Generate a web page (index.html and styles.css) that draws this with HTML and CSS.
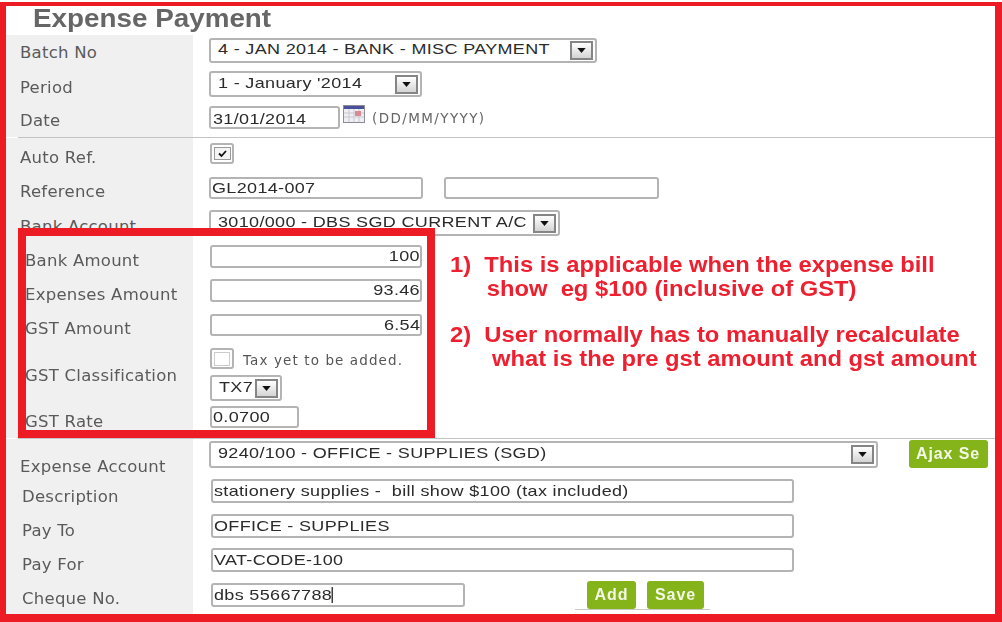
FILE: index.html
```html
<!DOCTYPE html>
<html lang="en">
<head>
<meta charset="utf-8">
<title>Expense Payment</title>
<link rel="stylesheet" href="styles.css">
</head>
<body>
<main class="frame">
  <div class="soft">
    <h1 class="title"><span>Expense Payment</span></h1>
    <div class="row r-batch"><div class="label">Batch No</div><div class="cell"><div class="field select w-batch"><span class="tx">4 - JAN 2014 - BANK - MISC PAYMENT</span><svg class="arrow" viewBox="0 0 22 18"><path d="M6 6h10l-5 6z"/></svg></div></div></div>
    <div class="row r-period"><div class="label">Period</div><div class="cell"><div class="field select w-period"><span class="tx">1 - January '2014</span><svg class="arrow" viewBox="0 0 22 18"><path d="M6 6h10l-5 6z"/></svg></div></div></div>
    <div class="row r-date"><div class="label">Date</div><div class="cell inline"><div class="field text w-date"><span class="tx">31/01/2014</span></div>
      <svg class="cal" viewBox="0 0 22 18"><rect x=".5" y=".5" width="21" height="17" fill="#efeef2" stroke="#8d8d95"/><rect x="1" y="1" width="20" height="3" fill="#4a4f9c"/><path d="M1 8h20M1 12h20M6 4v13M11 4v13M16 4v13" stroke="#c9c9d2" fill="none"/><rect x="12" y="6" width="6" height="5" fill="#d98a94"/></svg>
      <span class="hint">(DD/MM/YYYY)</span></div></div>
    <div class="row r-auto rule"><div class="label">Auto Ref.</div><div class="cell"><div class="check"><svg viewBox="0 0 17 13"><rect x=".5" y=".5" width="16" height="12" fill="#f4f4f4" stroke="#9a9a9a"/><path d="M5 6.500l2.500 2.500 4.500-5" fill="none" stroke="#111" stroke-width="1.800"/></svg></div></div></div>
    <div class="row r-ref"><div class="label">Reference</div><div class="cell inline"><div class="field text w-ref"><span class="tx">GL2014-007</span></div><div class="field text w-ref2"></div></div></div>
    <div class="row r-bank"><div class="label">Bank Account</div><div class="cell"><div class="field select w-bank"><span class="tx">3010/000 - DBS SGD CURRENT A/C</span><svg class="arrow" viewBox="0 0 22 18"><path d="M6 6h10l-5 6z"/></svg></div></div></div>
    <div class="row r-amt1 boxed"><div class="label">Bank Amount</div><div class="cell"><div class="field text num w-amt"><span class="tx">100</span></div></div></div>
    <div class="row r-amt2 boxed"><div class="label">Expenses Amount</div><div class="cell"><div class="field text num w-amt"><span class="tx">93.46</span></div></div></div>
    <div class="row r-amt3 boxed"><div class="label">GST Amount</div><div class="cell"><div class="field text num w-amt"><span class="tx">6.54</span></div></div></div>
    <div class="row r-class boxed"><div class="label">GST Classification</div><div class="cell stack">
      <div class="inline"><div class="check"></div><span class="tax">Tax yet to be added.</span></div>
      <div class="field select w-tx"><span class="tx">TX7</span><svg class="arrow" viewBox="0 0 22 18"><path d="M6 6h10l-5 6z"/></svg></div>
    </div></div>
    <div class="row r-rate boxed"><div class="label">GST Rate</div><div class="cell"><div class="field text w-rate"><span class="tx">0.0700</span></div></div></div>
    <div class="row r-exp rule"><div class="label">Expense Account</div><div class="cell inline between"><div class="field select w-exp"><span class="tx">9240/100 - OFFICE - SUPPLIES (SGD)</span><svg class="arrow" viewBox="0 0 22 18"><path d="M6 6h10l-5 6z"/></svg></div><div class="btn btn-ajax"><span>Ajax Se</span></div></div></div>
    <div class="row r-desc lower"><div class="label">Description</div><div class="cell"><div class="field text w-long"><span class="tx">stationery supplies -&nbsp; bill show $100 (tax included)</span></div></div></div>
    <div class="row r-payto lower"><div class="label">Pay To</div><div class="cell"><div class="field text w-long"><span class="tx">OFFICE - SUPPLIES</span></div></div></div>
    <div class="row r-payfor lower"><div class="label">Pay For</div><div class="cell"><div class="field text w-long"><span class="tx">VAT-CODE-100</span></div></div></div>
    <div class="row r-cheque lower"><div class="label">Cheque No.</div><div class="cell inline"><div class="field text w-cheque"><span class="tx">dbs 55667788<i class="caret"></i></span></div>
      <div class="actions"><div class="btn btn-add">Add</div><div class="btn btn-save">Save</div></div></div></div>
  </div>
  <div class="callout"></div>
  <div class="notes">
    <p>1)&nbsp; This is applicable when the expense bill</p>
    <p class="n2">show&nbsp; eg $100 (inclusive of GST)</p>
    <p class="n3">2)&nbsp; User normally has to manually recalculate</p>
    <p class="n4">what is the pre gst amount and gst amount</p>
  </div>
</main>
</body>
</html>
```
FILE: styles.css
```css
* { box-sizing: border-box; }
html, body { margin: 0; padding: 0; }
body { width: 1002px; height: 622px; overflow: hidden; background: #fff; padding-top: 2px; }
.frame {
  position: relative; width: 1002px; height: 620px;
  border: solid #ed1c24; border-width: 4px 7px 8px 6px;
  background: #fff; overflow: hidden;
}
.soft { filter: blur(.4px); }
.title {
  margin: 0; height: 29px; padding-left: 27px;
  font: bold 26px/24px "Liberation Sans", Arial, sans-serif; color: #666;
}
.title span { display: inline-block; transform: scaleX(1.07); transform-origin: left; }
.row { display: grid; grid-template-columns: 187px 1fr; height: var(--h); }
.label {
  background: #f0f0f0; padding: var(--lt) 0 0 14px;
  font: 16.500px/20px "DejaVu Sans", sans-serif; letter-spacing: .25px; color: #5a5a5a; white-space: nowrap;
  overflow: hidden;
}
.boxed .label { padding-left: 19px; }
.lower .label { padding-left: 16px; }
.cell { padding: var(--ct) 0 0 16px; min-width: 0; }
.inline { display: flex; align-items: flex-start; }
.stack { display: flex; flex-direction: column; }
.rule { position: relative; border-top: 1px solid #c4c4c4; }
.rule::before { content: ""; position: absolute; left: 0; top: -1px; width: 12px; height: 1px; background: #fff; }

.r-batch  { --h: 34px; --lt: 8px;  --ct: 3px; }
.r-period { --h: 34px; --lt: 9px;  --ct: 2px; }
.r-date   { --h: 34px; --lt: 8px;  --ct: 3px; }
.r-auto   { --h: 35px; --lt: 10px; --ct: 5px; }
.r-ref    { --h: 34px; --lt: 10px; --ct: 5px; }
.r-bank   { --h: 35px; --lt: 11px; --ct: 4px; }
.r-amt1   { --h: 34px; --lt: 10px; --ct: 4px; }
.r-amt2   { --h: 35px; --lt: 10px; --ct: 4px; }
.r-amt3   { --h: 34px; --lt: 9px;  --ct: 4px; }
.r-class  { --h: 60px; --lt: 22px; --ct: 4px; }
.r-rate   { --h: 34px; --lt: 8px;  --ct: 2px; }
.r-exp    { --h: 37px; --lt: 18px; --ct: 2px; }
.r-desc   { --h: 35px; --lt: 12px; --ct: 4px; }
.r-payto  { --h: 34px; --lt: 11px; --ct: 4px; }
.r-payfor { --h: 35px; --lt: 11px; --ct: 4px; }
.r-cheque { --h: 35px; --lt: 10px; --ct: 4px; }

.field {
  background: #fff; border: 2px solid #b4b4b4; border-radius: 3px;
  font: 15px/18px "Liberation Sans", Arial, sans-serif; letter-spacing: .28px;
  color: #2b2b2b; white-space: nowrap; overflow: hidden;
}
.tx { display: inline-block; transform: scaleX(1.2); transform-origin: left; }
.text { height: 23px; padding: 1px 0 0 1px; }
.num { text-align: right; padding: 0; }
.num .tx { transform-origin: right; }
.select { display: flex; align-items: center; justify-content: space-between; padding: 0 2px 3px 7px; height: 26px; }
.arrow {
  flex: none; width: 23px; height: 19px; margin-top: 3px;
  background: linear-gradient(#fff, #d4d4d4); border: 2px solid #858585;
}
.arrow path { fill: #111; }
.w-batch  { width: 388px; height: 25px; }
.w-period { width: 213px; }
.w-date   { width: 131px; padding-left: 2px; }
.w-date .tx { margin-top: 1px; }
.w-ref    { width: 214px; height: 22px; padding: 0 0 0 1px; }
.w-ref .tx { margin-top: -1px; }
.w-ref2   { width: 215px; height: 22px; margin-left: 21px; }
.w-bank   { width: 351px; }
.boxed .cell { padding-left: 17px; }
.w-amt    { width: 212px; }
.r-amt3 .w-amt { height: 22px; }
.w-tx     { width: 72px; margin-top: 6px; }
.w-rate   { width: 89px; height: 22px; padding-top: 0; }
.r-exp .cell { padding-right: 6px; }
.w-exp    { width: 669px; height: 27px; }
.between  { gap: 31px; }
.lower .cell { padding-left: 18px; }
.w-long   { width: 583px; height: 24px; }
.w-cheque { width: 254px; height: 24px; }
.caret { display: inline-block; width: 1px; height: 16px; background: #111; vertical-align: -3px; }

.check {
  width: 24px; height: 21px; border: 2px solid #b4b4b4; border-radius: 3px; background: #fff;
  display: flex; align-items: center; justify-content: center; flex: none;
}
.check svg { width: 17px; height: 13px; }
.r-class .check::after { content: ""; width: 14px; height: 12px; border: 1px solid #ccc; }
.r-auto .cell { padding-left: 17px; }
.cal { width: 22px; height: 18px; margin: -1px 7px 0 3px; flex: none; }
.hint { font: 13.500px/18px "DejaVu Sans", sans-serif; color: #666; margin-top: 3px; letter-spacing: 1.4px; }
.tax { font: 13.500px/18px "DejaVu Sans", sans-serif; color: #555; margin: 3px 0 0 9px; letter-spacing: 1.1px; }

.btn {
  background: #84b31a; color: #f4f8e6; border-radius: 3px;
  font: bold 16px/28px "Liberation Sans", Arial, sans-serif; letter-spacing: .9px;
  text-align: center; overflow: hidden; white-space: nowrap; flex: none;
}
.btn-ajax { width: 79px; height: 28px; margin-top: -1px; padding: 0 8px 0 7px; line-height: 28px; text-align: left; }
.btn-ajax span { display: block; overflow: hidden; }
.actions { display: flex; gap: 11px; margin-left: 110px; margin-top: -2px; padding: 0 6px 0 12px; position: relative; }
.actions::after { content: ""; position: absolute; left: 0; right: 0; top: 28px; height: 1px; background: #c9c9c9; }
.btn-add { width: 49px; height: 28px; position: relative; z-index: 1; }
.btn-save { width: 57px; height: 28px; position: relative; z-index: 1; }

.callout { position: absolute; left: 12px; top: 222px; width: 417px; height: 210px; border: 8px solid #ed1c24; }
.notes {
  position: absolute; left: 444px; top: 247px; width: 500px;
  font: bold 22px/24px "Liberation Sans", Arial, sans-serif; color: #ee2030; white-space: nowrap;
  transform: scaleX(1.08); transform-origin: left;
}
.notes p { margin: 0; }
.notes .n2 { padding-left: 34px; }
.notes .n3 { margin-top: 22px; }
.notes .n4 { padding-left: 39px; }
```
